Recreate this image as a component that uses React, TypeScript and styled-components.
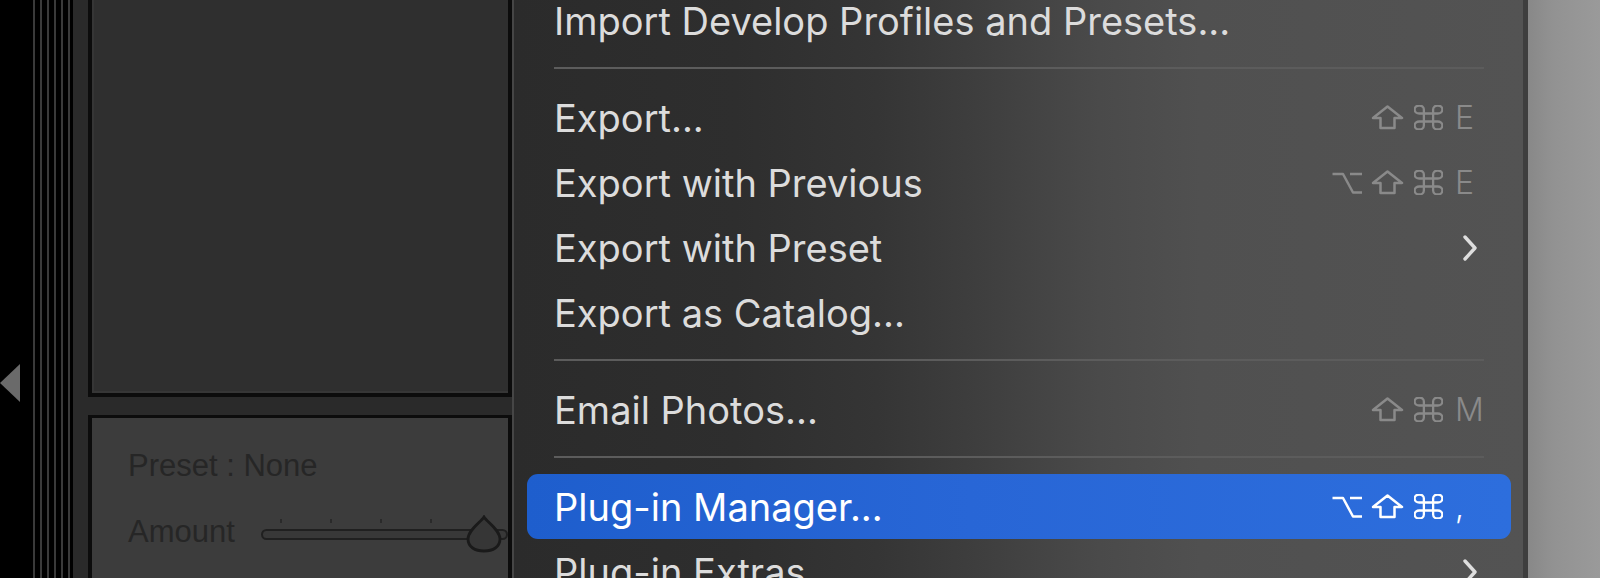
import React from "react";
import styled, { createGlobalStyle } from "styled-components";

const GlobalStyle = createGlobalStyle`
  html, body {
    margin: 0;
    padding: 0;
    background: #000;
    overflow: hidden;
  }
  * {
    box-sizing: border-box;
  }
`;

const StyledPage = styled("div")`
  display: flex;
  flex-direction: row;
  width: 1600px;
  height: 578px;
  overflow: hidden;
  background: #000;
`;

const StyledEdge = styled("div")`
  width: 33px;
  flex-shrink: 0;
  background: #000;
  display: flex;
  flex-direction: column;
  padding-top: 364px;
`;

const StyledCollapseArrow = styled("div")`
  width: 0;
  height: 0;
  border-top: 19px solid transparent;
  border-bottom: 19px solid transparent;
  border-right: 20px solid #6a6a6a;
`;

const StyledFilmLines = styled("div")`
  width: 40px;
  flex-shrink: 0;
  background: repeating-linear-gradient(
    90deg,
    #3a3a3a 0px,
    #3a3a3a 2px,
    #000 2px,
    #000 7px
  );
`;

const StyledPanelColumn = styled("div")`
  width: 439px;
  flex-shrink: 0;
  background: #2a2a2a;
  padding-left: 15px;
  display: flex;
  flex-direction: column;
  gap: 18px;
`;

const StyledUpperPanel = styled("div")`
  height: 397px;
  flex-shrink: 0;
  background: #2f2f2f;
  border-left: 4px solid #0c0c0c;
  border-right: 4px solid #0c0c0c;
  border-bottom: 4px solid #0c0c0c;
  box-shadow: inset 2px -2px 0 #363636;
`;

const StyledLowerPanel = styled("div")`
  flex: 1;
  background: #3c3c3c;
  border-left: 4px solid #0c0c0c;
  border-right: 4px solid #0c0c0c;
  border-top: 3px solid #0c0c0c;
  padding: 31px 0 0 36px;
  display: flex;
  flex-direction: column;
  gap: 32px;
  font-family: "Liberation Sans", Arial, sans-serif;
  font-size: 31px;
  color: #262626;
`;

const StyledPresetLabel = styled("div")`
  line-height: 34px;
`;

const StyledAmountRow = styled("div")`
  display: flex;
  flex-direction: row;
  align-items: center;
  gap: 26px;
  line-height: 34px;
`;

const StyledTrack = styled("div")`
  position: relative;
  flex: 1;
  height: 11px;
  margin-top: 4px;
  border: 2px solid #202020;
  border-radius: 6px;
  background: #383838;
`;

const StyledTick = styled("div")<{ $left: number }>`
  position: absolute;
  left: ${(p) => p.$left}px;
  top: -12px;
  width: 2px;
  height: 4px;
  background: #2a2a2a;
`;

const StyledThumb = styled("svg")`
  position: absolute;
  left: 203px;
  top: -16px;
`;

const StyledMenu = styled("div")`
  width: 1016px;
  flex-shrink: 0;
  border-left: 2px solid #464646;
  border-right: 5px solid #3e3e3e;
  padding: 0 12px 0 13px;
  margin-top: -12px;
  background: linear-gradient(
    90deg,
    #2b2b2b 0%,
    #2e2e2e 22%,
    #353535 36%,
    #404040 48%,
    #4a4a4a 58%,
    #505050 68%,
    #535353 100%
  );
  font-family: Inter, "Noto Sans", "DejaVu Sans", sans-serif;
  display: flex;
  flex-direction: column;
`;

const StyledItem = styled("div")<{ $active?: boolean }>`
  height: 65px;
  flex-shrink: 0;
  display: flex;
  flex-direction: row;
  align-items: center;
  padding: 0 20px 0 27px;
  border-radius: 11px;
  font-size: 38px;
  color: ${(p) => (p.$active ? "#ffffff" : "#dcdcdc")};
  background: ${(p) =>
    p.$active
      ? "linear-gradient(90deg, #1e5ecd 0%, #2866d6 45%, #2d6edd 100%)"
      : "transparent"};
`;

const StyledLabel = styled("div")`
  flex: 1;
  white-space: nowrap;
`;

const StyledShortcut = styled("div")<{ $active?: boolean }>`
  display: flex;
  flex-direction: row;
  align-items: center;
  gap: 6px;
  color: ${(p) => (p.$active ? "#ffffff" : "#8a8a8a")};
`;

const StyledMods = styled("div")`
  display: flex;
  flex-direction: row;
  align-items: center;
`;

const StyledMod = styled("span")`
  width: 41px;
  height: 30px;
  display: flex;
  align-items: center;
  justify-content: center;
`;

const StyledKey = styled("span")`
  width: 36px;
  height: 30px;
  font-size: 32px;
  font-weight: 300;
  display: flex;
  align-items: center;
`;

const StyledSeparator = styled("div")`
  height: 32px;
  flex-shrink: 0;
  padding: 14px 27px 0 27px;
  &::after {
    content: "";
    display: block;
    height: 2px;
    background: #5c5c5c;
  }
`;

const StyledBackdrop = styled("div")`
  flex: 1;
  background: linear-gradient(90deg, #888888 0%, #929292 35%, #9a9a9a 100%);
`;

type Modifier = "option" | "shift" | "command";

const ModifierIcon: React.FC<{ mod: Modifier }> = ({ mod }) => {
  if (mod === "shift") {
    return (
      <svg width="33" height="25" viewBox="0 0 33 25">
        <polygon
          points="16.5,1.5 31,13 23.5,13 23.5,23 9.5,23 9.5,13 2,13"
          fill="none"
          stroke="currentColor"
          strokeWidth="2.5"
          strokeLinejoin="round"
        />
      </svg>
    );
  }
  if (mod === "command") {
    return (
      <svg width="29" height="25" viewBox="2.6 2.6 18.8 18.8" preserveAspectRatio="none">
        <path
          d="M15 6v12a3 3 0 1 0 3-3H6a3 3 0 1 0 3 3V6a3 3 0 1 0-3 3h12a3 3 0 1 0-3-3"
          fill="none"
          stroke="currentColor"
          strokeWidth="2.3"
          vectorEffect="non-scaling-stroke"
          strokeLinejoin="round"
        />
      </svg>
    );
  }
  return (
    <svg width="32" height="24" viewBox="0 0 32 24">
      <path
        d="M1.5 3 H12 L22 21.5 H31 M19 3 H31"
        fill="none"
        stroke="currentColor"
        strokeWidth="2.5"
        strokeLinejoin="round"
      />
    </svg>
  );
};

type Entry =
  | { kind: "sep" }
  | {
      kind: "item";
      label: string;
      mods?: Modifier[];
      key?: string;
      submenu?: boolean;
      active?: boolean;
    };

const entries: Entry[] = [
  { kind: "item", label: "Import Develop Profiles and Presets..." },
  { kind: "sep" },
  { kind: "item", label: "Export...", mods: ["shift", "command"], key: "E" },
  {
    kind: "item",
    label: "Export with Previous",
    mods: ["option", "shift", "command"],
    key: "E",
  },
  { kind: "item", label: "Export with Preset", submenu: true },
  { kind: "item", label: "Export as Catalog..." },
  { kind: "sep" },
  { kind: "item", label: "Email Photos...", mods: ["shift", "command"], key: "M" },
  { kind: "sep" },
  {
    kind: "item",
    label: "Plug-in Manager...",
    mods: ["option", "shift", "command"],
    key: ",",
    active: true,
  },
  { kind: "item", label: "Plug-in Extras", submenu: true },
];

const Chevron: React.FC = () => (
  <svg width="30" height="32" viewBox="0 0 30 32">
    <polyline
      points="10,5 20,16 10,27"
      fill="none"
      stroke="#dedede"
      strokeWidth="3.4"
      strokeLinecap="round"
      strokeLinejoin="round"
    />
  </svg>
);

const App: React.FC = () => {
  return (
    <>
      <GlobalStyle />
      <StyledPage>
        <StyledEdge>
          <StyledCollapseArrow />
        </StyledEdge>
        <StyledFilmLines />
        <StyledPanelColumn>
          <StyledUpperPanel />
          <StyledLowerPanel>
            <StyledPresetLabel>Preset : None</StyledPresetLabel>
            <StyledAmountRow>
              <span>Amount</span>
              <StyledTrack>
                {[17, 67, 117, 167].map((left) => (
                  <StyledTick key={left} $left={left} />
                ))}
                <StyledThumb width="36" height="38" viewBox="0 0 36 38">
                  <path
                    d="M18 2 C21 7 34 15 34 24 C34 32 27 36 18 36 C9 36 2 32 2 24 C2 15 15 7 18 2 Z"
                    fill="#363636"
                    stroke="#1a1a1a"
                    strokeWidth="2.8"
                  />
                </StyledThumb>
              </StyledTrack>
            </StyledAmountRow>
          </StyledLowerPanel>
        </StyledPanelColumn>
        <StyledMenu>
          {entries.map((entry, index) =>
            entry.kind === "sep" ? (
              <StyledSeparator key={`sep-${index}`} />
            ) : (
              <StyledItem key={entry.label} $active={entry.active}>
                <StyledLabel>{entry.label}</StyledLabel>
                {(entry.mods || entry.submenu) && (
                  <StyledShortcut $active={entry.active}>
                    <StyledMods>
                      {entry.mods?.map((mod) => (
                        <StyledMod key={mod}>
                          <ModifierIcon mod={mod} />
                        </StyledMod>
                      ))}
                    </StyledMods>
                    <StyledKey>{entry.submenu ? <Chevron /> : entry.key}</StyledKey>
                  </StyledShortcut>
                )}
              </StyledItem>
            )
          )}
        </StyledMenu>
        <StyledBackdrop />
      </StyledPage>
    </>
  );
};

export default App;
